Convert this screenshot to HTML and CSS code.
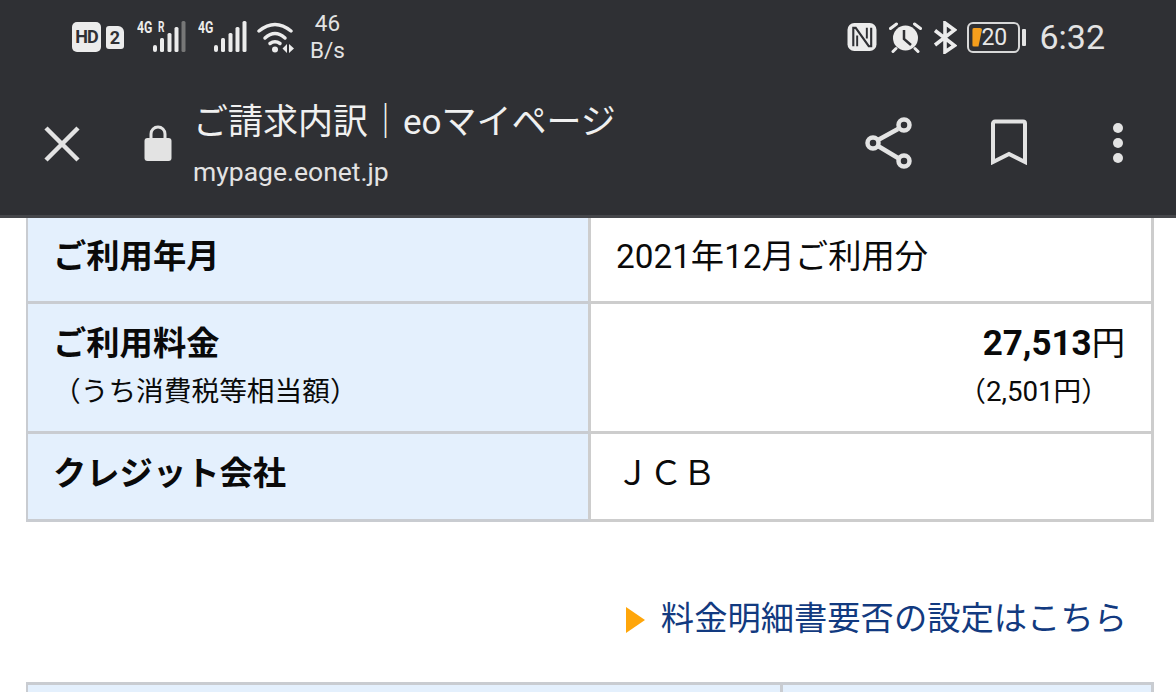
FILE: index.html
```html
<!DOCTYPE html>
<html lang="ja">
<head>
<meta charset="utf-8">
<title>ご請求内訳</title>
<link rel="stylesheet" href="styles.css">
</head>
<body>
<header class="appbar">
  <div class="status">
    <div class="status-left">
      <span class="badge-hd">HD</span>
      <span class="badge-sim">2</span>
      <div class="net net-r"><span class="net-label">4G</span><span class="net-r-label">R</span>
        <svg class="bars" viewBox="0 0 34 32"><g fill="#ececec"><rect x="1" y="24" width="4" height="7" rx="2"/><rect x="8" y="17" width="4" height="14" rx="1.500"/><rect x="15.500" y="12" width="4" height="19" rx="1.500"/><rect x="22.500" y="6" width="4" height="25" rx="1.500"/></g><rect x="29.500" y="0" width="4" height="31" rx="1.500" fill="#777"/></svg>
      </div>
      <div class="net"><span class="net-label">4G</span>
        <svg class="bars" viewBox="0 0 34 32"><g fill="#ececec"><rect x="1" y="24" width="4" height="7" rx="2"/><rect x="8" y="17" width="4" height="14" rx="1.500"/><rect x="15.500" y="12" width="4" height="19" rx="1.500"/><rect x="22.500" y="6" width="4" height="25" rx="1.500"/><rect x="29.500" y="0" width="4" height="31" rx="1.500"/></g></svg>
      </div>
      <svg class="ic-wifi" viewBox="0 0 38 31"><g fill="none" stroke="#ececec" stroke-width="3.500" stroke-linecap="round"><path d="M2 9Q18-4 34 9"/><path d="M8 16Q18 7 28 16"/><path d="M13 21.500Q18 18 23 21.500"/></g><circle cx="18" cy="27.500" r="3" fill="#ececec"/><path d="M30 22v9l-4.500-4.500zM32 22v9l5-4.500z" fill="#ececec"/></svg>
      <div class="speed"><span>46</span><span>B/s</span></div>
    </div>
    <div class="status-right">
      <svg class="ic-nfc" viewBox="0 0 30 30"><rect x="0" y="0" width="30" height="29" rx="7" fill="#ececec"/><path d="M6 24V5h2.500L22 24h2.500V5" fill="none" stroke="#2f3034" stroke-width="2.200"/><path d="M10 13v11M20 5v11" stroke="#2f3034" stroke-width="2"/></svg>
      <svg class="ic-alarm" viewBox="0 0 33 31"><circle cx="16.500" cy="16" r="12.500" fill="#ececec"/><path d="M15 8v9l7 6" fill="none" stroke="#2f3034" stroke-width="2.500"/><path d="M1.500 6.500l6-4.500M31.500 6.500l-6-4.500M4 29.500l3-3M29 29.500l-3-3" stroke="#ececec" stroke-width="3" stroke-linecap="round"/></svg>
      <svg class="ic-bt" viewBox="0 0 24 33"><path d="M2 9.500l19.500 15-9.500 6.500V2l9.500 7L2 24" fill="none" stroke="#ececec" stroke-width="3.600"/></svg>
      <div class="battery"><span class="battery-body"><span class="battery-fill"></span><span class="battery-text">20</span></span><span class="battery-cap"></span></div>
      <span class="clock">6:32</span>
    </div>
  </div>
  <div class="toolbar">
    <svg class="ic-close" viewBox="0 0 36 36"><path d="M2 2l32 32M34 2L2 34" stroke="#e3e3e3" stroke-width="4.500" fill="none"/></svg>
    <svg class="ic-lock" viewBox="0 0 28 36"><path d="M7 15V9a7 7 0 0 1 14 0v6" fill="none" stroke="#e3e3e3" stroke-width="3"/><rect x="0.500" y="13" width="27" height="23" rx="3" fill="#e3e3e3"/></svg>
    <div class="titles">
      <div class="page-title">ご請求内訳｜eoマイページ</div>
      <div class="page-url">mypage.eonet.jp</div>
    </div>
    <div class="actions">
      <svg class="ic-share" viewBox="0 0 48 52"><g fill="none" stroke="#e3e3e3" stroke-width="4.500"><path d="M13 23L33 12M13 29l20 12"/><circle cx="8" cy="26" r="5.500"/><circle cx="39" cy="8" r="5.500"/><circle cx="39" cy="44" r="5.500"/></g></svg>
      <svg class="ic-bookmark" viewBox="0 0 38 46"><path d="M3 43V4.500a2 2 0 0 1 2-2h28a2 2 0 0 1 2 2V43L19 35z" fill="none" stroke="#e3e3e3" stroke-width="4"/></svg>
      <svg class="ic-more" viewBox="0 0 12 42"><circle cx="6" cy="6" r="5" fill="#e3e3e3"/><circle cx="6" cy="21" r="5" fill="#e3e3e3"/><circle cx="6" cy="36" r="5" fill="#e3e3e3"/></svg>
    </div>
  </div>
</header>
<main class="content">
  <table class="info">
    <tbody>
      <tr class="row-month"><th>ご利用年月</th><td>2021年12月ご利用分</td></tr>
      <tr class="row-fee">
        <th>ご利用料金<span class="sub">（うち消費税等相当額）</span></th>
        <td class="money"><div class="total"><b>27,513</b>円</div><div class="tax">（2,501円）</div></td>
      </tr>
      <tr class="row-card"><th>クレジット会社</th><td>ＪＣＢ</td></tr>
    </tbody>
  </table>
  <p class="link-row"><span class="arrow"></span><a href="#">料金明細書要否の設定はこちら</a></p>
  <table class="next"><tbody><tr><th></th><th></th></tr></tbody></table>
</main>
</body>
</html>
```
FILE: styles.css
```css
* { box-sizing: border-box; }
html, body { margin: 0; padding: 0; }
body {
  width: 1176px; height: 692px; overflow: hidden; background: #fff;
  font-family: "Roboto", "Noto Sans CJK JP", sans-serif; color: #0a0a0a;
}
.appbar { background: #2f3034; height: 218px; border-bottom: 3px solid #45464a; color: #ececec; }
.status { height: 74px; padding: 0 71px 0 72px; display: flex; justify-content: space-between; align-items: center; }
.status-left, .status-right { display: flex; align-items: center; }
.badge-hd { width: 29px; height: 30px; border-radius: 5px; background: #ececec; color: #2f3034; font: 700 18px/30px "Roboto", sans-serif; text-align: center; letter-spacing: -1px; }
.badge-sim { width: 18px; height: 23px; margin-left: 5px; border-radius: 3px 6px 3px 3px; background: #ececec; color: #2f3034; font: 700 18px/23px "Roboto", sans-serif; text-align: center; }
.net { position: relative; width: 49px; height: 31px; margin-left: 12px; }
.net-r { margin-left: 13px; }
.net-label, .net-r-label { position: absolute; top: -3px; left: 0; font: 700 17px/17px "Roboto", sans-serif; transform: scaleX(.72); transform-origin: left center; }
.net-r-label { left: 21px; font-size: 14px; }
.bars { position: absolute; right: 0; bottom: 0; width: 34px; height: 32px; }
.ic-wifi { width: 38px; height: 31px; margin-left: 10px; }
.speed { display: flex; flex-direction: column; align-items: center; margin-left: 15px; font-size: 22.500px; line-height: 27px; color: #e3e3e3; }
.ic-nfc { width: 30px; height: 29px; }
.ic-alarm { width: 33px; height: 31px; margin-left: 12px; }
.ic-bt { width: 24px; height: 33px; margin-left: 11px; }
.battery { display: flex; align-items: center; margin-left: 10px; }
.battery-body { width: 53px; height: 31px; border: 2px solid #d8d8d8; border-radius: 6px; position: relative; display: block; }
.battery-fill { position: absolute; left: 3px; top: 4px; width: 10px; height: 19px; background: #f59e1c; border-radius: 2px; clip-path: polygon(0 0, 100% 0, 60% 100%, 0 100%); }
.battery-text { position: absolute; left: 12px; top: 0; font-size: 23px; line-height: 27px; color: #e8e8e8; }
.battery-cap { width: 4px; height: 17px; margin-left: 2px; background: #e3e3e3; border-radius: 1px; }
.clock { margin-left: 13px; font-size: 34px; line-height: 40px; color: #e3e3e3; }
.toolbar { height: 141px; display: flex; align-items: flex-start; padding-left: 44px; }
.ic-close { width: 36px; height: 36px; margin-top: 52px; }
.ic-lock { width: 28px; height: 36px; margin: 51px 0 0 64px; }
.titles { margin: 24px 0 0 21px; }
.page-title { font-size: 35px; line-height: 50px; color: #f0f0f0; }
.page-url { font-size: 26.500px; line-height: 36px; margin-top: 6px; color: #e3e3e3; }
.actions { margin-left: auto; display: flex; align-items: flex-start; }
.ic-share { width: 48px; height: 52px; margin-top: 43px; }
.ic-bookmark { width: 38px; height: 46px; margin: 45px 0 0 77px; }
.ic-more { width: 12px; height: 42px; margin: 48px 52px 0 84px; }
.content { padding: 0 22px 0 26px; }
table { border-collapse: separate; border-spacing: 0; width: 1128px; table-layout: fixed; }
.info th, .info td { padding: 0; vertical-align: top; font-size: 33.300px; line-height: 40px; }
.info th { width: 565px; background: #e4f0fd; text-align: left; font-weight: 700; padding-left: 25px; border-left: 2px solid #c9ccd1; border-right: 3px solid #cdcdcd; border-bottom: 3px solid #c9ccd1; }
.info td { padding-left: 25px; background: #fff; border-right: 3px solid #cdcdcd; border-bottom: 3px solid #cdcdcd; }
.row-month { height: 86px; }
.row-fee { height: 130px; }
.row-card { height: 88px; }
.row-month th, .row-month td { padding-top: 19px; }
.row-fee th, .row-fee td { padding-top: 20px; }
.row-card th, .row-card td { padding-top: 20px; }
.sub { display: block; font-size: 27.700px; font-weight: 400; line-height: 36px; margin-top: 10px; }
.money { text-align: right; }
.info td.money { padding-right: 26px; }
.total b { font-size: 35px; }
.tax { font-size: 27.700px; line-height: 36px; padding-right: 16px; margin-top: 10px; }
.link-row { margin: 76px 0 0 0; height: 44px; display: flex; align-items: center; justify-content: flex-end; padding-right: 27px; }
.arrow { width: 0; height: 0; border-left: 19px solid #ffa60a; border-top: 13px solid transparent; border-bottom: 13px solid transparent; margin-right: 16px; }
.link-row a { color: #123a80; font-size: 33.300px; line-height: 40px; margin-bottom: 2px; text-decoration: none; }
.next { margin-top: 40px; }
.next th { height: 10px; padding: 0; border-top: 3px solid #c9ccd1; border-right: 3px solid #c9ccd1; background: #e4f0fd; }
.next th:first-child { width: 757px; border-left: 2px solid #c9ccd1; }
```
